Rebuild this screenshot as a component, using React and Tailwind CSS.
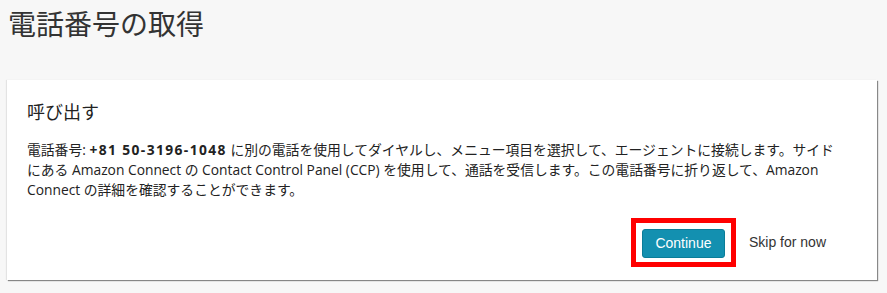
export default function App() {
  return (
    <div className="min-h-[293px] w-full bg-[#f7f7f7] pl-[7px] pr-[10px] pt-[7px] pb-[12px] font-['Open_Sans','Noto_Sans_CJK_JP',sans-serif] text-[#222]">
      {/* Page title */}
      <h1 className="pl-[1px] text-[28px] leading-[34px] font-normal text-[#333]">電話番号の取得</h1>

      {/* Card */}
      <div className="mt-[39px] h-[200px] bg-white px-5 pt-[20px] shadow-[1px_1px_1px_rgba(0,0,0,0.45),-1px_0_1px_rgba(0,0,0,0.08)]">
        <h2 className="text-[18px] leading-[24px] font-normal text-[#222]">呼び出す</h2>
        <p className="mt-[16px] whitespace-nowrap text-[13.8px] leading-[20px] text-[#222]">
          電話番号: <span className="font-bold tracking-[1.4px]">+81 50-3196-1048</span> に別の電話を使用してダイヤルし、メニュー項目を選択して、エージェントに接続します。サイド
          <br />
          にある Amazon Connect の Contact Control Panel (CCP) を使用して、通話を受信します。この電話番号に折り返して、Amazon
          <br />
          Connect の詳細を確認することができます。
        </p>

        <div className="mt-[18px] flex items-center justify-end gap-[13px] pr-[31px]">
          <div className="border-[5px] border-[#ff0000] px-[6px] pt-[6px] pb-[4px]">
            <button className="flex h-[29px] w-[83px] items-center justify-center rounded-[3px] border border-[#0a7d98] bg-[#1390b0] font-['Liberation_Sans',sans-serif] text-[14px] text-white">
              Continue
            </button>
          </div>
          <button className="font-['Liberation_Sans',sans-serif] text-[14px] text-[#333]">Skip for now</button>
        </div>
      </div>
    </div>
  );
}
